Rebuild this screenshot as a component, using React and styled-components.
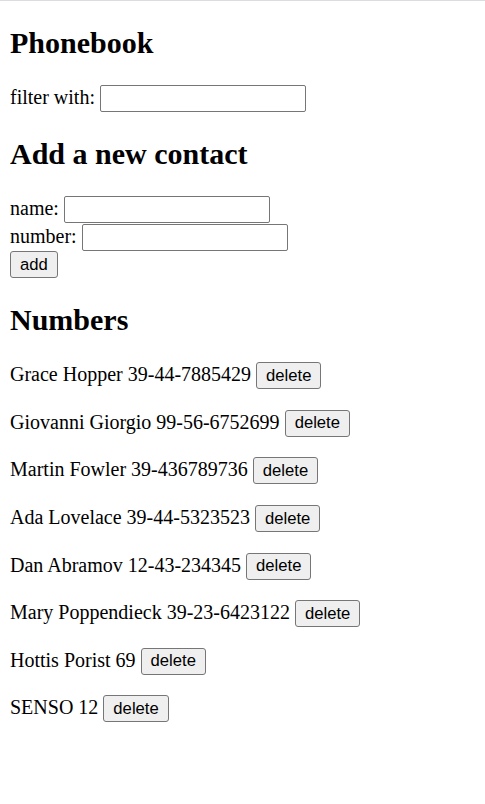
import React, { useState } from 'react'
import styled, { createGlobalStyle } from 'styled-components'

const GlobalStyle = createGlobalStyle`
  html {
    border-top: 1px solid #dadce0;
    background: #fff;
  }
  body {
    margin: 0 10px 10px;
    font-family: "Liberation Serif", "Times New Roman", serif;
    font-size: 20px;
    color: #000;
  }
`

const Title = styled.h1`
  font-size: 30px;
  font-weight: bold;
  margin: 24.9px 0;
`

const SubTitle = styled.h2`
  font-size: 30px;
  font-weight: bold;
  margin: 24.9px 0;
`

const Field = styled.div`
  line-height: normal;
  min-height: 27.5px;
`

const TextInput = styled.input`
  box-sizing: border-box;
  width: 206px;
  height: 27px;
  margin: 0;
  padding: 1px 2px;
  border: 1px solid #767676;
  border-radius: 2px;
  font-family: "Liberation Sans", Arial, sans-serif;
  font-size: 16.67px;
  vertical-align: baseline;
  background: #fff;
`

const Button = styled.button`
  box-sizing: border-box;
  height: 27px;
  margin: 0;
  padding: 1px 9px;
  border: 1px solid #767676;
  border-radius: 3px;
  background: #efefef;
  font-family: "Liberation Sans", Arial, sans-serif;
  font-size: 16.67px;
  color: #000;
  cursor: pointer;
`

const Entry = styled.p`
  margin: 20px 0;
  min-height: 27.57px;
`

const initialPersons = [
  { id: 1, name: 'Grace Hopper', number: '39-44-7885429' },
  { id: 2, name: 'Giovanni Giorgio', number: '99-56-6752699' },
  { id: 3, name: 'Martin Fowler', number: '39-436789736' },
  { id: 4, name: 'Ada Lovelace', number: '39-44-5323523' },
  { id: 5, name: 'Dan Abramov', number: '12-43-234345' },
  { id: 6, name: 'Mary Poppendieck', number: '39-23-6423122' },
  { id: 7, name: 'Hottis Porist', number: '69' },
  { id: 8, name: 'SENSO', number: '12' },
]

function App() {
  const [persons, setPersons] = useState(initialPersons)
  const [filter, setFilter] = useState('')
  const [newName, setNewName] = useState('')
  const [newNumber, setNewNumber] = useState('')

  const addPerson = (e) => {
    e.preventDefault()
    if (!newName) return
    setPersons(persons.concat({ id: Date.now(), name: newName, number: newNumber }))
    setNewName('')
    setNewNumber('')
  }

  const shown = persons.filter(p => p.name.toLowerCase().includes(filter.toLowerCase()))

  return (
    <>
      <GlobalStyle />
      <Title>Phonebook</Title>
      <Field>
        filter with: <TextInput value={filter} onChange={e => setFilter(e.target.value)} />
      </Field>
      <SubTitle>Add a new contact</SubTitle>
      <form onSubmit={addPerson}>
        <Field>
          name: <TextInput value={newName} onChange={e => setNewName(e.target.value)} />
        </Field>
        <Field>
          number: <TextInput value={newNumber} onChange={e => setNewNumber(e.target.value)} />
        </Field>
        <Field>
          <Button type="submit">add</Button>
        </Field>
      </form>
      <SubTitle>Numbers</SubTitle>
      {shown.map(p => (
        <Entry key={p.id}>
          {p.name} {p.number}{' '}
          <Button onClick={() => setPersons(persons.filter(x => x.id !== p.id))}>delete</Button>
        </Entry>
      ))}
    </>
  )
}

export default App
